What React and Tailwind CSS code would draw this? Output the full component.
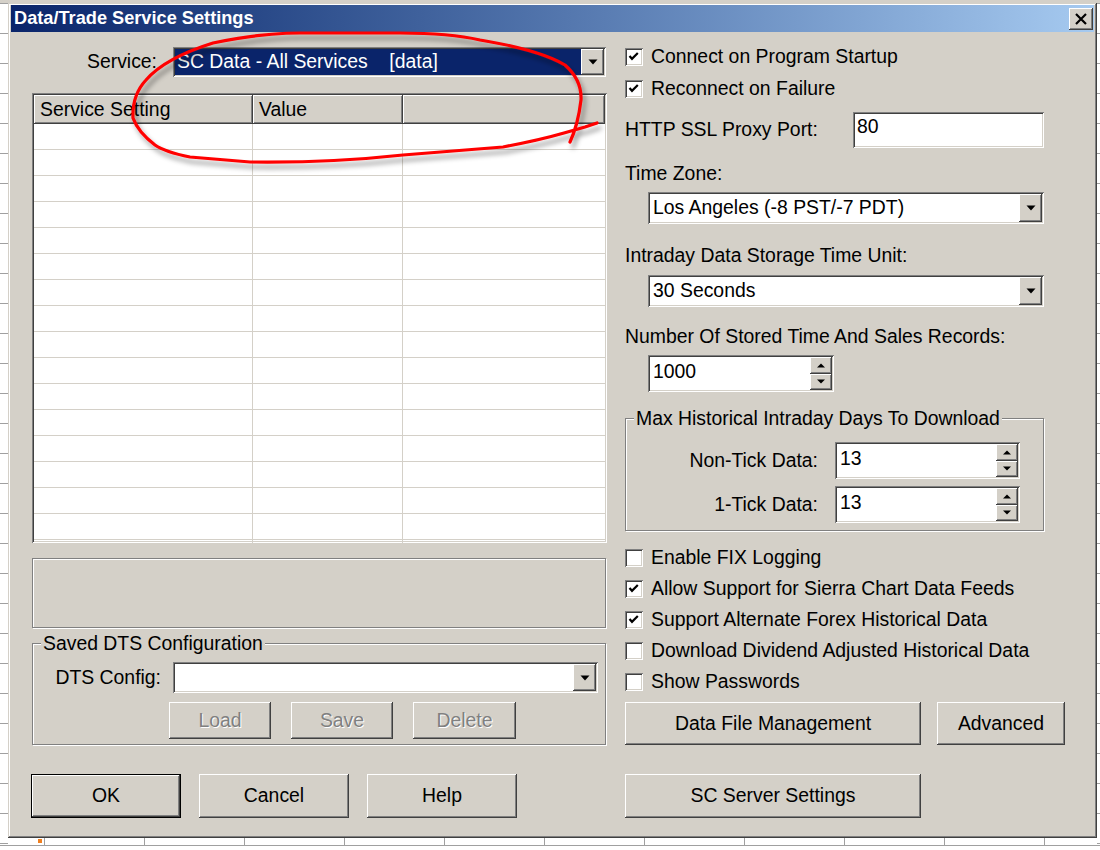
const RAISED = 'bg-[#d4d0c8] shadow-[inset_-1px_-1px_0_#404040,inset_1px_1px_0_#fff,inset_-2px_-2px_0_#808080]'
const SUNKEN = 'bg-white shadow-[inset_1px_1px_0_#808080,inset_-1px_-1px_0_#fff,inset_2px_2px_0_#404040,inset_-2px_-2px_0_#d4d0c8]'
const ETCHED = 'border border-[#808080] shadow-[1px_1px_0_#fff,inset_1px_1px_0_#fff]'

function Button({ className = '', disabled, isDefault, children }) {
  return (
    <div
      className={`flex items-center justify-center ${RAISED} ${isDefault ? 'border border-black' : ''} ${
        disabled ? 'text-[#808080] [text-shadow:1px_1px_0_#fff]' : ''
      } ${className}`}
    >
      {children}
    </div>
  )
}

function DownArrow() {
  return (
    <svg width="10" height="6" viewBox="0 0 10 6">
      <polygon points="0.5,0.5 9.5,0.5 5,5.5" fill="#000" />
    </svg>
  )
}

function DropButton() {
  return (
    <div className={`w-[23px] h-full flex items-center justify-center ${RAISED}`}>
      <DownArrow />
    </div>
  )
}

function Combo({ className = '', selected, children }) {
  return (
    <div className={`flex p-[2px] ${SUNKEN} ${className}`}>
      <div
        className={`flex-1 flex items-center whitespace-pre ${
          selected ? 'bg-[#0a246a] text-white pl-[2px]' : 'pl-[3px]'
        }`}
      >
        {children}
      </div>
      <DropButton />
    </div>
  )
}

function SpinArrow({ up }) {
  return (
    <svg width="8" height="5" viewBox="0 0 8 5">
      <polygon points={up ? '0,4.5 8,4.5 4,0.5' : '0,0.5 8,0.5 4,4.5'} fill="#000" />
    </svg>
  )
}

function Spin({ className = '', value }) {
  return (
    <div className={`flex p-[2px] ${SUNKEN} ${className}`}>
      <div className="flex-1 pl-[3px] pt-[5px]">{value}</div>
      <div className="w-[22px] flex flex-col">
        <div className={`flex-1 flex items-center justify-center ${RAISED}`}>
          <SpinArrow up />
        </div>
        <div className={`flex-1 flex items-center justify-center ${RAISED}`}>
          <SpinArrow />
        </div>
      </div>
    </div>
  )
}

function Check({ checked, className = '', children }) {
  return (
    <div className={`flex items-center ${className}`}>
      <div className={`w-[18px] h-[18px] ${SUNKEN}`}>
        {checked && (
          <svg width="18" height="18" viewBox="0 0 18 18">
            <polyline points="4.5,8 7,10.8 12.8,5" fill="none" stroke="#000" strokeWidth="2.2" />
          </svg>
        )}
      </div>
      <span className="ml-[8px]">{children}</span>
    </div>
  )
}

function Group({ title, className = '', children }) {
  return (
    <div className={`relative ${ETCHED} ${className}`}>
      <span className="absolute left-[8px] -top-[10px] px-[2px] bg-[#d4d0c8]">{title}</span>
      {children}
    </div>
  )
}

function SettingsTable() {
  const rows = Array.from({ length: 17 })
  return (
    <div className={`ml-[1px] w-[575px] h-[450px] p-[2px] overflow-hidden ${SUNKEN}`}>
      <div className="flex h-[29px]">
        <div className={`w-[219px] pl-[6px] flex items-center ${RAISED}`}>Service Setting</div>
        <div className={`w-[150px] pl-[6px] flex items-center ${RAISED}`}>Value</div>
        <div className={`flex-1 ${RAISED}`} />
      </div>
      {rows.map((_, i) => (
        <div key={i} className="flex h-[26px] border-b border-[#d4d0c8]">
          <div className="w-[219px] border-r border-[#d4d0c8]" />
          <div className="w-[150px] border-r border-[#d4d0c8]" />
          <div className="flex-1" />
        </div>
      ))}
    </div>
  )
}

function LeftColumn() {
  return (
    <div className="w-[576px] flex flex-col">
      <div className="mt-[15px] h-[30px] flex items-center">
        <span className="w-[126px] text-right">Service:</span>
        <Combo selected className="ml-[16px] w-[433px] h-[30px]">
          {'SC Data - All Services    [data]'}
        </Combo>
      </div>
      <div className="mt-[16px]">
        <SettingsTable />
      </div>
      <div className={`mt-[15px] ml-[1px] w-[574px] h-[70px] ${ETCHED}`} />
      <Group title="Saved DTS Configuration" className="mt-[15px] ml-[1px] w-[574px] h-[102px]">
        <div className="mt-[18px] flex items-center h-[31px]">
          <span className="w-[128px] text-right">DTS Config:</span>
          <Combo className="ml-[12px] w-[425px] h-[31px]" />
        </div>
        <div className="mt-[9px] ml-[136px] flex gap-[20px] h-[37px]">
          <Button disabled className="w-[102px]">Load</Button>
          <Button disabled className="w-[102px]">Save</Button>
          <Button disabled className="w-[103px]">Delete</Button>
        </div>
      </Group>
      <div className="mt-[29px] flex gap-[18px] h-[44px]">
        <Button isDefault className="w-[150px]">OK</Button>
        <Button className="w-[150px]">Cancel</Button>
        <Button className="w-[150px]">Help</Button>
      </div>
    </div>
  )
}

function RightColumn() {
  return (
    <div className="w-[440px] flex flex-col pt-[9px]">
      <Check checked className="h-[32px]">Connect on Program Startup</Check>
      <Check checked className="h-[32px]">Reconnect on Failure</Check>
      <div className="mt-[7px] w-[419px] h-[36px] flex items-center justify-between">
        <span>HTTP SSL Proxy Port:</span>
        <div className={`w-[191px] h-[36px] pl-[4px] pt-[5px] ${SUNKEN}`}>80</div>
      </div>
      <div className="mt-[15px] h-[22px] flex items-center">Time Zone:</div>
      <Combo className="mt-[7px] ml-[23px] w-[396px] h-[32px]">Los Angeles (-8 PST/-7 PDT)</Combo>
      <div className="mt-[21px] h-[22px] flex items-center">Intraday Data Storage Time Unit:</div>
      <Combo className="mt-[8px] ml-[23px] w-[396px] h-[32px]">30 Seconds</Combo>
      <div className="mt-[19px] h-[22px] flex items-center">Number Of Stored Time And Sales Records:</div>
      <Spin value="1000" className="mt-[7px] ml-[23px] w-[186px] h-[37px]" />
      <Group title="Max Historical Intraday Days To Download" className="mt-[26px] w-[419px] h-[113px]">
        <div className="mt-[23px] flex items-center h-[37px]">
          <span className="w-[192px] text-right">Non-Tick Data:</span>
          <Spin value="13" className="ml-[17px] w-[185px] h-[37px]" />
        </div>
        <div className="mt-[7px] flex items-center h-[37px]">
          <span className="w-[192px] text-right">1-Tick Data:</span>
          <Spin value="13" className="ml-[17px] w-[185px] h-[37px]" />
        </div>
      </Group>
      <div className="mt-[11px] flex flex-col">
        <Check className="h-[31px]">Enable FIX Logging</Check>
        <Check checked className="h-[31px]">Allow Support for Sierra Chart Data Feeds</Check>
        <Check checked className="h-[31px]">Support Alternate Forex Historical Data</Check>
        <Check className="h-[31px]">Download Dividend Adjusted Historical Data</Check>
        <Check className="h-[31px]">Show Passwords</Check>
      </div>
      <div className="mt-[5px] flex gap-[16px] h-[43px]">
        <Button className="w-[296px]">Data File Management</Button>
        <Button className="w-[128px]">Advanced</Button>
      </div>
      <Button className="mt-[29px] w-[296px] h-[44px]">SC Server Settings</Button>
    </div>
  )
}

function Dialog() {
  return (
    <div className="w-[1089px] h-[835px] bg-[#d4d0c8] pt-[2px] px-[3px] shadow-[inset_-1px_-1px_0_#404040,inset_1px_1px_0_#d4d0c8,inset_-2px_-2px_0_#808080,inset_2px_2px_0_#fff]">
      <div className="h-[27px] flex items-center justify-between bg-linear-to-r from-[#0a246a] to-[#a6caf0]">
        <span className="pl-[3px] text-white font-bold text-[18.2px]">Data/Trade Service Settings</span>
        <div className={`mr-[1px] w-[24px] h-[22px] flex items-center justify-center ${RAISED}`}>
          <svg width="14" height="12" viewBox="0 0 14 12">
            <path d="M2 1 L12 11 M12 1 L2 11" stroke="#000" strokeWidth="2.2" />
          </svg>
        </div>
      </div>
      <div className="flex gap-[18px] pl-[20px]">
        <LeftColumn />
        <RightColumn />
      </div>
    </div>
  )
}

function Scribble() {
  return (
    <svg className="absolute left-0 top-0 pointer-events-none" width="1100" height="850">
      <defs>
        <filter id="sh" x="-10%" y="-20%" width="130%" height="160%">
          <feDropShadow dx="3" dy="5" stdDeviation="2.5" floodColor="#000" floodOpacity="0.4" />
        </filter>
      </defs>
      <path
        d="M597 123 L585 127 L564 133 Q540 140 503 147 L403 155 Q330 163 250 162 L190 157 Q165 152 155 145 Q138 132 133 118 Q132 95 146 80 Q165 58 213 43 Q260 33 300 33 L400 33 Q450 33 480 40 Q540 50 565 65 Q582 80 581 100 Q578 125 570 142"
        fill="none"
        stroke="#ff0000"
        strokeWidth="3.2"
        strokeLinecap="round"
        strokeLinejoin="round"
        filter="url(#sh)"
      />
    </svg>
  )
}

export default function App() {
  const cells = Array.from({ length: 28 })
  const cols = Array.from({ length: 11 })
  return (
    <div className="relative w-[1100px] h-[850px] overflow-hidden bg-white text-black text-[19.4px] leading-none font-['Liberation_Sans',Arial,sans-serif]">
      <div className="h-[3px] bg-[#d4d0c8]" />
      <div className="flex h-[835px]">
        <div className="w-[8px] flex flex-col">
          <div className="h-[2px] border-b border-[#a0a0a0]" />
          {cells.map((_, i) => (
            <div key={i} className="h-[30px] shrink-0 border-b border-[#a0a0a0]" />
          ))}
        </div>
        <Dialog />
        <div className="flex-1 flex flex-col">
          <div className="h-[2px] border-b border-[#a0a0a0]" />
          {cells.map((_, i) => (
            <div key={i} className="h-[30px] shrink-0 border-b border-[#a0a0a0]" />
          ))}
        </div>
      </div>
      <div className="flex h-[12px] border-b border-[#a0a0a0] mt-[-4px] pt-[4px]">
        <div className="relative w-[45px] shrink-0 border-r border-[#a0a0a0]">
          <span className="absolute right-[2px] top-[1px] w-[4px] h-[4px] bg-[#f08020]" />
        </div>
        {cols.map((_, i) => (
          <div key={i} className="w-[100px] shrink-0 border-r border-[#a0a0a0]" />
        ))}
      </div>
      <Scribble />
    </div>
  )
}
